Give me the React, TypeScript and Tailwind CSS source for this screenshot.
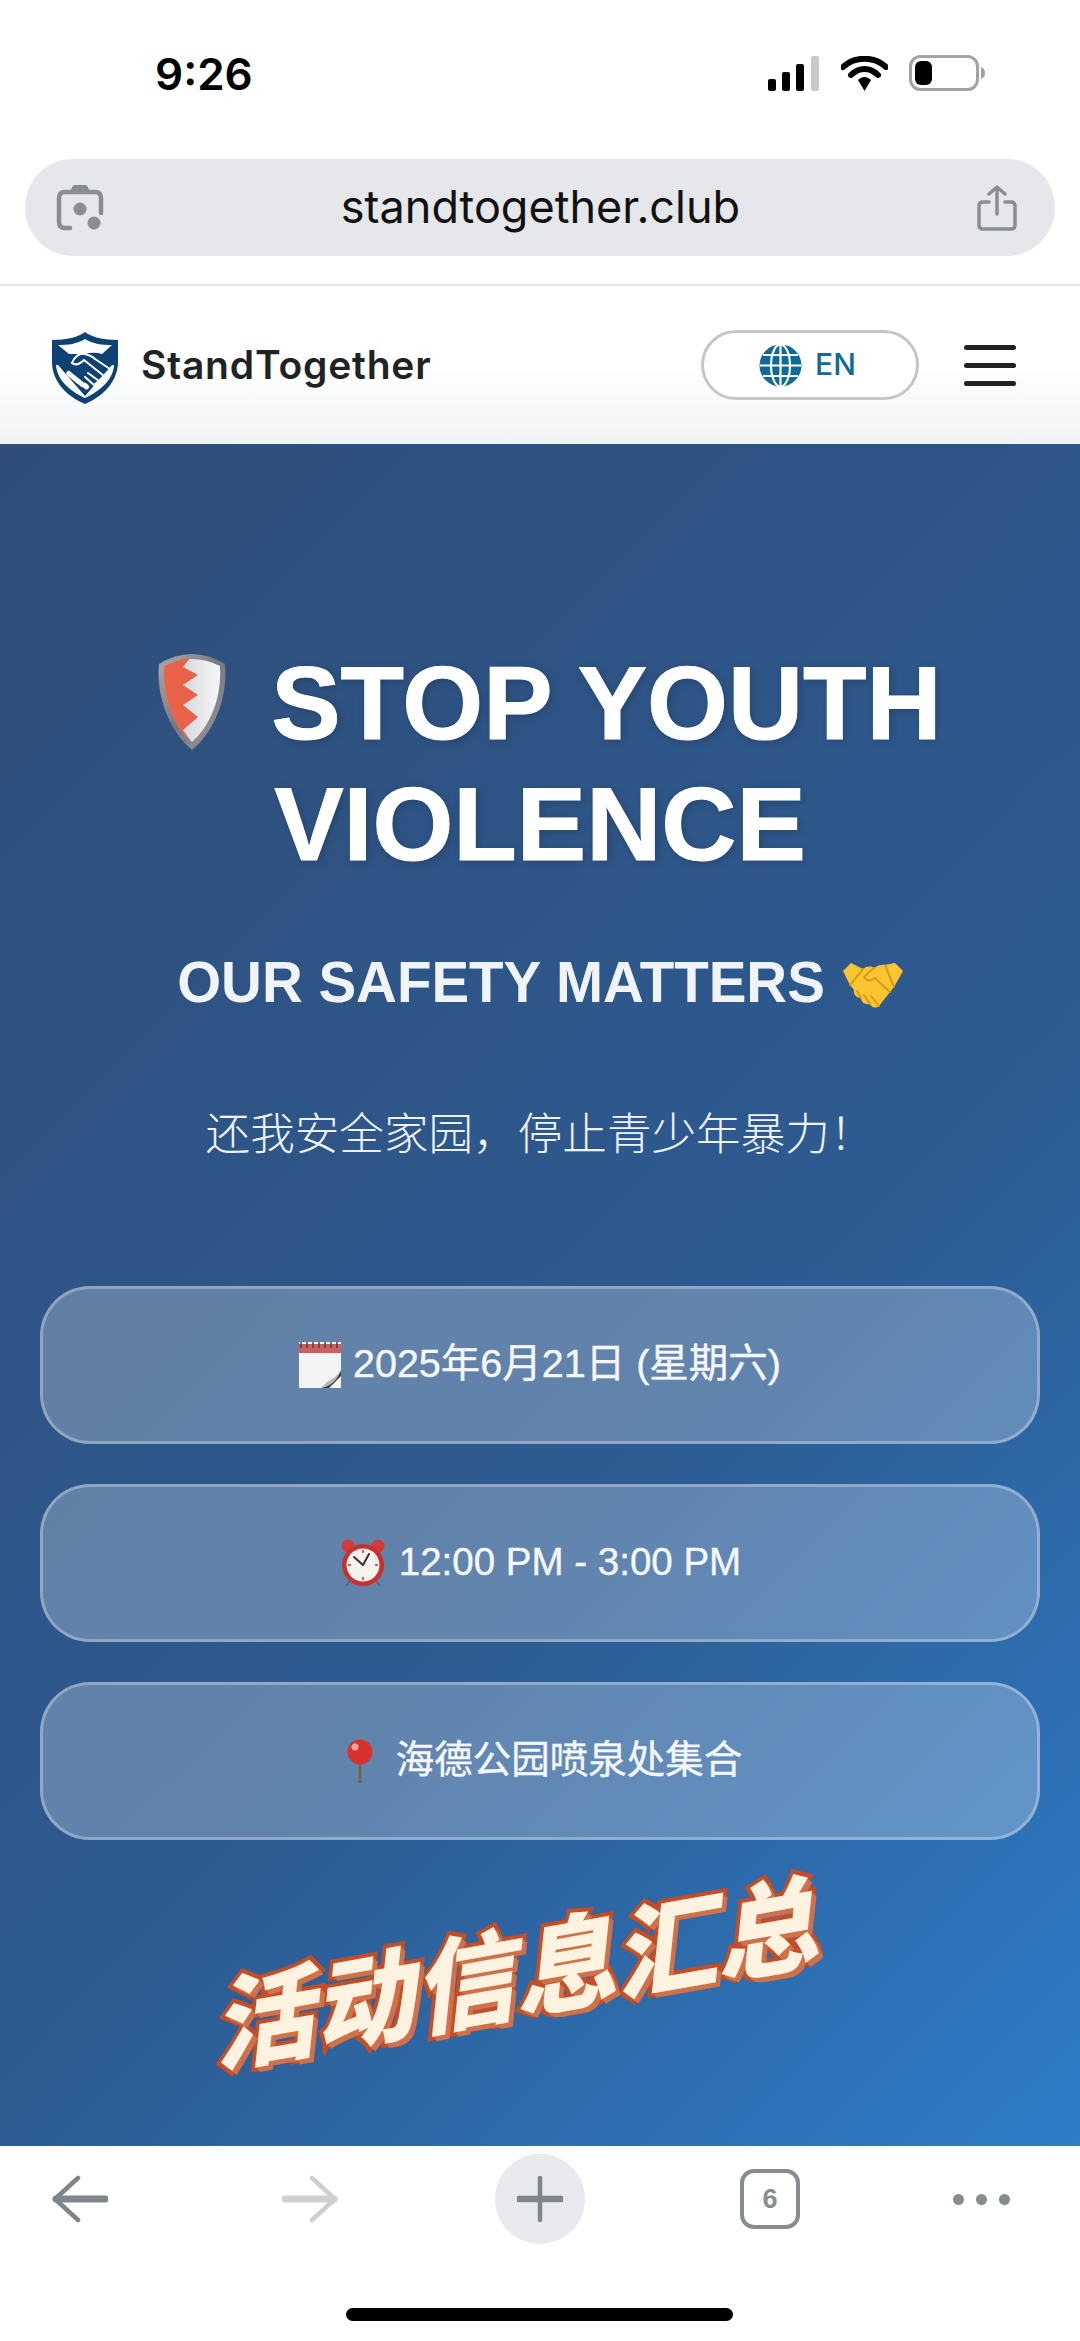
const cjkSans = "font-['Liberation_Sans','Noto_Sans_CJK_SC',sans-serif]";

function StatusIcons() {
  return (
    <div className="flex items-center">
      <svg width="52" height="35" viewBox="0 0 52 35" className="mr-[21px]">
        <rect x="0" y="23" width="8" height="12" rx="2" fill="#000" />
        <rect x="14" y="16" width="8" height="19" rx="2" fill="#000" />
        <rect x="28" y="8" width="8" height="27" rx="2" fill="#000" />
        <rect x="43" y="0" width="8" height="35" rx="2" fill="#c9c9c9" />
      </svg>
      <svg width="47" height="35" viewBox="0 0 47 35" className="mr-[21px]">
        <path d="M2 11C14 0 33 0 45 11" fill="none" stroke="#000" strokeWidth="6" strokeLinecap="round" />
        <path d="M10 19C18 11 29 11 37 19" fill="none" stroke="#000" strokeWidth="6" strokeLinecap="round" />
        <path d="M17 24C21 20 26 20 30 24L23.5 35Z" fill="#000" />
      </svg>
      <svg width="76" height="36" viewBox="0 0 76 36">
        <rect x="1.5" y="1.5" width="67" height="33" rx="10" fill="none" stroke="#a3a3a3" strokeWidth="3" />
        <rect x="6" y="6" width="17" height="24" rx="6" fill="#000" />
        <path d="M72 12C75 13 76 15 76 18C76 21 75 23 72 24Z" fill="#a3a3a3" />
      </svg>
    </div>
  );
}

function LensIcon() {
  return (
    <svg width="48" height="46" viewBox="0 0 48 46" fill="none" stroke="#8b8e90" strokeWidth="4.5">
      <path d="M16 7L19 2H29L32 7" fill="#8b8e90" strokeLinejoin="round" />
      <path d="M14 43H9C5 43 3 41 3 37V13C3 9 5 7 9 7H39C43 7 45 9 45 13V28" strokeLinecap="round" />
      <circle cx="24" cy="24" r="6.5" fill="#8b8e90" stroke="none" />
      <circle cx="38" cy="38" r="6.5" fill="#8b8e90" stroke="none" />
    </svg>
  );
}

function ShareIcon() {
  return (
    <svg width="40" height="46" viewBox="0 0 40 46" fill="none" stroke="#8b8e90" strokeWidth="3.5" strokeLinecap="round" strokeLinejoin="round">
      <path d="M12 17H6C3.5 17 2 18.5 2 21V40C2 42.5 3.5 44 6 44H34C36.5 44 38 42.5 38 40V21C38 18.5 36.5 17 34 17H28" />
      <path d="M20 29V2M12 9L20 2L28 9" />
    </svg>
  );
}

function LogoMark() {
  return (
    <svg width="66" height="72" viewBox="0 0 66 72" className="mt-[5px] mr-[23px]">
      <path d="M33 0C39 5 52 8 66 8V30C66 50 50 65 33 72C16 65 0 50 0 30V8C14 8 27 5 33 0Z" fill="#0f4274" />
      <path d="M6 13C16 13 25 12 33 7C41 12 50 13 60 13L50 22C44 20 38 21 32 22L17 22Z" fill="#fff" />
      <path d="M6 33L33 64L60 33L62 33C61 48 48 59 33 66C18 59 5 48 4 33Z" fill="#fff" />
      <g fill="none" stroke="#fff" strokeWidth="2" strokeLinecap="round" strokeLinejoin="round">
        <path d="M20 31C23 24 27 21 33 22C37 23 40 24 43 27L58 37" />
        <path d="M20 31C24 34 29 31 32 28L52 44L47 49L36 41M47 49L42 53L33 45" />
      </g>
      <g fill="#fff">
        <rect x="16" y="38" width="5" height="10" rx="2.5" transform="rotate(-50 18.5 43)" />
        <rect x="21" y="42" width="5" height="11" rx="2.5" transform="rotate(-50 23.5 47)" />
        <rect x="26" y="46" width="5" height="10" rx="2.5" transform="rotate(-50 28.5 51)" />
        <rect x="31" y="50" width="5" height="8" rx="2.5" transform="rotate(-50 33.5 54)" />
      </g>
    </svg>
  );
}

function GlobeIcon() {
  return (
    <svg width="43" height="43" viewBox="0 0 43 43" className="mr-[13px]">
      <circle cx="21.5" cy="21.5" r="21" fill="#0f6a99" />
      <g fill="none" stroke="#fff" strokeWidth="2.2">
        <ellipse cx="21.5" cy="21.5" rx="9.5" ry="21" />
        <path d="M21.5 0V43M1 21.5H42M4 11H39M4 32H39" />
      </g>
    </svg>
  );
}

function ShieldEmoji() {
  return (
    <svg width="68" height="100" viewBox="0 0 68 100" className="relative -top-[12px] mr-[16px] ml-[20px] inline-block align-middle">
      <defs>
        <linearGradient id="metal" x1="0" y1="0" x2="1" y2="1">
          <stop offset="0" stopColor="#a9abb0" />
          <stop offset="0.5" stopColor="#77797e" />
          <stop offset="1" stopColor="#9a9ca0" />
        </linearGradient>
        <linearGradient id="silver" x1="0" y1="0" x2="1" y2="0">
          <stop offset="0" stopColor="#c8ccd0" />
          <stop offset="1" stopColor="#f5f6f7" />
        </linearGradient>
      </defs>
      <path d="M1 14Q34 -6 67 14C70 50 55 82 34 100C13 82 -2 50 1 14Z" fill="url(#metal)" />
      <path d="M6 16Q34 2 62 16C64 48 52 76 34 92C16 76 4 48 6 16Z" fill="url(#silver)" />
      <path d="M6 16Q18 10 32 8L25 17L40 25L25 35L40 45L25 55L40 67L25 80L33 91C16 76 4 48 6 16Z" fill="#e8634a" />
    </svg>
  );
}

function HandshakeEmoji() {
  return (
    <svg width="60" height="46" viewBox="0 0 60 46" className="ml-[18px] inline-block align-[-6px]">
      <path d="M0 9L8 1L20 7C24 4 28 4 31 6C35 3 39 2 42 3L52 1L60 9L51 25L36 44C32 47 28 45 27 42C22 43 18 40 18 36C13 36 10 32 11 28L7 23Z" fill="#fbc531" />
      <path d="M31 6L21 15C24 20 28 19 32 16L47 30M36 44L28 34M27 42L21 33M18 36L14 29M7 23L20 7M42 3L51 25" fill="none" stroke="#d99a1c" strokeWidth="2" strokeLinecap="round" />
    </svg>
  );
}

function CalendarEmoji() {
  return (
    <svg width="42" height="46" viewBox="0 0 42 46">
      <rect x="0" y="0" width="42" height="46" fill="#f4f4f4" />
      <rect x="0" y="2" width="42" height="9" fill="#c9605f" />
      <path d="M2 0V6M8 0V6M14 0V6M20 0V6M26 0V6M32 0V6M38 0V6" stroke="#444" strokeWidth="1.5" />
      <path d="M42 28V34L30 46H22C32 44 38 38 42 28Z" fill="#3c3c3c" />
      <path d="M42 28C38 38 32 44 22 46L28 40C33 38 38 34 42 28Z" fill="#b8b8b8" />
    </svg>
  );
}

function ClockEmoji() {
  return (
    <svg width="48" height="48" viewBox="0 0 48 48">
      <circle cx="9" cy="7" r="6.5" fill="#d63a36" />
      <circle cx="39" cy="7" r="6.5" fill="#d63a36" />
      <path d="M11 42L7 47M37 42L41 47" stroke="#666" strokeWidth="2" />
      <circle cx="24" cy="26" r="21" fill="#c8302c" />
      <circle cx="24" cy="26" r="16.5" fill="#f6f2ee" />
      <path d="M24 26L15 18M24 26L30 15" stroke="#333" strokeWidth="2" strokeLinecap="round" />
      <path d="M24 11V14M24 38V41M9 26H12M36 26H39" stroke="#c8302c" strokeWidth="1.5" />
    </svg>
  );
}

function PinEmoji() {
  return (
    <svg width="32" height="44" viewBox="0 0 32 44">
      <rect x="14.5" y="22" width="3" height="22" fill="#77635a" />
      <circle cx="16" cy="13" r="12.5" fill="#d9322e" />
      <circle cx="11" cy="8" r="3.5" fill="#f3a09a" />
    </svg>
  );
}

function InfoCard({ icon, text, row, size }: { icon: React.ReactNode; text: string; row: string; size: string }) {
  return (
    <div className={`flex h-[158px] items-center justify-center rounded-[50px] border-[3px] border-white/30 bg-white/25 ${row}`}>
      {icon}
      <span className={`${cjkSans} ${size} -mt-[2px] leading-none font-normal text-[#f4f7fb] [-webkit-text-stroke:0.4px_#f4f7fb]`}>{text}</span>
    </div>
  );
}

export default function App() {
  return (
    <div className="flex h-[2341px] w-[1080px] flex-col overflow-hidden bg-white">
      <div className="flex h-[159px] items-start justify-between pt-[50px] pr-[95px] pl-[155px]">
        <span className="font-['Inter',sans-serif] text-[44px] leading-[48px] font-semibold text-black">9:26</span>
        <div className="pt-[5px]">
          <StatusIcons />
        </div>
      </div>

      <div className="mx-[25px] flex h-[97px] items-center justify-between rounded-[48px] bg-[#e5e7ea] pr-[38px] pl-[31px]">
        <LensIcon />
        <span className="-mt-[2px] font-['Inter',sans-serif] text-[45px] text-[#111]">standtogether.club</span>
        <ShareIcon />
      </div>

      <div className="mt-[28px] flex h-[160px] items-center justify-between border-t-2 border-[#e4e4e4] bg-gradient-to-b from-white from-50% to-[#f0f2f4] pr-[64px] pl-[52px]">
        <div className="flex items-center">
          <LogoMark />
          <span className="font-['Inter',sans-serif] text-[39px] font-semibold tracking-[0.8px] text-[#1f2326]">StandTogether</span>
        </div>
        <div className="flex items-center">
          <div className="mr-[45px] flex h-[70px] w-[218px] items-center justify-center rounded-[35px] border-[3px] border-[#c4c6c8] bg-white pr-[5px]">
            <GlobeIcon />
            <span className="-mt-[2px] font-['Inter',sans-serif] text-[30px] font-medium text-[#0f6a99]">EN</span>
          </div>
          <div className="flex w-[52px] flex-col gap-[13px]">
            <span className="h-[5px] rounded-full bg-[#222]" />
            <span className="h-[5px] rounded-full bg-[#222]" />
            <span className="h-[5px] rounded-full bg-[#222]" />
          </div>
        </div>
      </div>

      <div className="flex h-[1702px] flex-col bg-[linear-gradient(135deg,#2f4d78_0%,#2d5b92_60%,#2e7dc8_100%)] px-[40px] pt-[199px]">
        <h1 className="text-center font-['Liberation_Sans',sans-serif] text-[104px] leading-[121px] font-bold text-white [-webkit-text-stroke:1px_#fff] [text-shadow:2px_2px_8px_rgba(0,0,0,0.2)]">
          <ShieldEmoji /> STOP YOUTH
          <br />
          VIOLENCE
        </h1>
        <p className="mt-[64px] text-center font-['Liberation_Sans',sans-serif] text-[56.5px] leading-[68px] font-bold text-[#f0f4f9]">
          OUR SAFETY MATTERS
          <HandshakeEmoji />
        </p>
        <p className="mt-[82px] text-center font-['Noto_Sans_CJK_SC',sans-serif] text-[44.6px] leading-[64px] font-light text-[#eef3f9]">
          还我安全家园，停止青少年暴力！
        </p>
        <div className="mt-[123px] flex flex-col gap-[40px]">
          <InfoCard icon={<CalendarEmoji />} text="2025年6月21日 (星期六)" row="gap-[12px]" size="text-[39.5px]" />
          <InfoCard icon={<ClockEmoji />} text="12:00 PM - 3:00 PM" row="gap-[12px]" size="text-[38.5px]" />
          <InfoCard icon={<PinEmoji />} text="海德公园喷泉处集合" row="gap-[20px] pl-[6px]" size="text-[38.5px]" />
        </div>
        <div className="flex flex-1 items-center justify-center pr-[34px] pb-[54px]">
          <span className="-rotate-[10deg] -skew-x-[16deg] font-['Noto_Sans_CJK_SC',sans-serif] text-[102px] leading-none font-black whitespace-nowrap text-[#fdf3e0] [paint-order:stroke_fill] [text-shadow:3px_3px_0_#d0714a,5px_5px_0_#d0714a] [-webkit-text-stroke:8px_#c54c24]">
            活动信息汇总
          </span>
        </div>
      </div>

      <div className="relative flex-1 bg-white">
        <div className="flex h-[106px] items-center pl-[52px]">
          <svg width="56" height="48" viewBox="0 0 56 48" fill="none" stroke="#7f8588" strokeLinecap="round" strokeLinejoin="round">
            <path d="M26 3L3 24L26 45" strokeWidth="4.5" />
            <path d="M4 24H53" strokeWidth="7" />
          </svg>
          <svg width="56" height="48" viewBox="0 0 56 48" fill="none" stroke="#cdcfd0" strokeLinecap="round" strokeLinejoin="round" className="ml-[174px]">
            <path d="M30 3L53 24L30 45" strokeWidth="4.5" />
            <path d="M3 24H52" strokeWidth="7" />
          </svg>
          <div className="ml-[157px] flex h-[90px] w-[90px] items-center justify-center rounded-full bg-[#e8eaed]">
            <svg width="46" height="46" viewBox="0 0 46 46" stroke="#7f8588" strokeLinecap="round">
              <path d="M23 2V44" strokeWidth="4.5" />
              <path d="M2 23H44" strokeWidth="6.5" />
            </svg>
          </div>
          <div className="ml-[155px] flex h-[60px] w-[60px] items-center justify-center rounded-[14px] border-[4px] border-[#878c8e] font-['Liberation_Sans',sans-serif] text-[27px] font-bold text-[#878c8e]">
            6
          </div>
          <div className="ml-[153px] flex gap-[12px]">
            <span className="h-[11px] w-[11px] rounded-full bg-[#878c8e]" />
            <span className="h-[11px] w-[11px] rounded-full bg-[#878c8e]" />
            <span className="h-[11px] w-[11px] rounded-full bg-[#878c8e]" />
          </div>
        </div>
        <div className="absolute bottom-[20px] left-[346px] h-[13px] w-[387px] rounded-full bg-black" />
      </div>
    </div>
  );
}
